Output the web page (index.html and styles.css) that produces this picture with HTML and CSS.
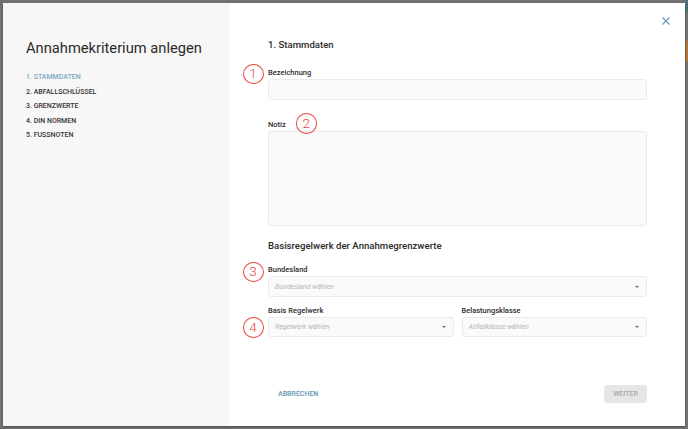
FILE: index.html
```html
<!DOCTYPE html>
<html lang="de">
<head>
<meta charset="utf-8">
<title>Annahmekriterium anlegen</title>
<link rel="stylesheet" href="styles.css">
</head>
<body>
<div class="backdrop">
  <div class="peek peek-teal"></div>
  <div class="peek peek-orange"></div>
  <div class="modal">
    <aside class="sidebar">
      <h1 class="title">Annahmekriterium anlegen</h1>
      <ol class="steps">
        <li class="step active">1. Stammdaten</li>
        <li class="step">2. Abfallschlüssel</li>
        <li class="step">3. Grenzwerte</li>
        <li class="step">4. DIN Normen</li>
        <li class="step">5. Fussnoten</li>
      </ol>
    </aside>
    <section class="main">
      <button class="close" aria-label="Schließen">
        <svg width="10" height="10" viewBox="0 0 10 10"><path d="M1.5 1.5 L8.5 8.5 M8.5 1.5 L1.5 8.5" stroke="#6a9fb8" stroke-width="1.2" fill="none"/></svg>
      </button>

      <span class="mark m1">1</span>
      <span class="mark m2">2</span>
      <span class="mark m3">3</span>
      <span class="mark m4">4</span>

      <h2 class="section-title">1. Stammdaten</h2>
      <div class="field f-bez">
        <label class="label">Bezeichnung</label>
        <div class="input"></div>
      </div>
      <div class="field f-notiz">
        <label class="label">Notiz</label>
        <div class="input textarea"></div>
      </div>

      <h2 class="section-title s2">Basisregelwerk der Annahmegrenzwerte</h2>
      <div class="field f-land">
        <label class="label">Bundesland</label>
        <div class="input select"><span class="placeholder">Bundesland wählen</span><span class="caret"></span></div>
      </div>
      <div class="row">
        <div class="field">
          <label class="label">Basis Regelwerk</label>
          <div class="input select"><span class="placeholder">Regelwerk wählen</span><span class="caret"></span></div>
        </div>
        <div class="field">
          <label class="label">Belastungsklasse</label>
          <div class="input select"><span class="placeholder">Abfallklasse wählen</span><span class="caret"></span></div>
        </div>
      </div>

      <footer class="footer">
        <button class="btn-text">Abbrechen</button>
        <button class="btn-next">Weiter</button>
      </footer>
    </section>
  </div>
</div>
</body>
</html>
```

FILE: styles.css
```css
* { box-sizing: border-box; }
html, body { margin: 0; padding: 0; }
body {
  width: 688px;
  height: 429px;
  overflow: hidden;
  background: #727272;
  font-family: Roboto, "Liberation Sans", Arial, sans-serif;
  color: #333;
}
.backdrop {
  position: relative;
  width: 688px;
  height: 429px;
  padding: 3px 0 0 3px;
}
.peek { position: absolute; left: 686px; width: 2px; }
.peek-teal { top: 0; height: 12px; background: #46707a; }
.peek-orange { top: 41px; height: 21px; background: #b7742a; }

.modal {
  display: flex;
  width: 682px;
  height: 423px;
  background: #fff;
  box-shadow: 0 1px 2px rgba(0,0,0,0.35);
}

/* Sidebar */
.sidebar {
  width: 227px;
  flex: none;
  background: #f7f7f7;
  padding: 35.7px 0 0 23px;
}
.title {
  margin: 0;
  font-size: 14.7px;
  line-height: 18px;
  font-weight: 400;
  color: #2a2a2a;
}
.steps {
  list-style: none;
  margin: 13.6px 0 0;
  padding: 0;
}
.step {
  font-size: 7px;
  line-height: 14.5px;
  font-weight: 500;
  text-transform: uppercase;
  color: #353535;
}
.step.active { color: #7aa9c0; }

/* Main */
.main {
  position: relative;
  flex: 1;
  display: flex;
  flex-direction: column;
  padding: 36.2px 38px 23px 38px;
}
.close {
  position: absolute;
  top: 13px;
  right: 14px;
  width: 10px;
  height: 10px;
  padding: 0;
  border: 0;
  background: none;
  display: flex;
}
.section-title {
  margin: 0;
  font-size: 9.6px;
  line-height: 12px;
  font-weight: 500;
  color: #2a2a2a;
}
.section-title.s2 { margin-top: 14.3px; }

.field { display: flex; flex-direction: column; }
.f-bez { margin-top: 16.5px; }
.f-notiz { margin-top: 19.5px; }
.f-land { margin-top: 13px; }

.label {
  display: block;
  font-size: 7.5px;
  line-height: 10px;
  font-weight: 500;
  color: #2c2c2c;
  margin-bottom: 1.5px;
}
.input {
  height: 21px;
  background: #fafafa;
  border: 1px solid #ebebeb;
  border-radius: 3px;
}
.textarea { height: 94.5px; }
.select {
  height: 20.7px;
  display: flex;
  align-items: center;
  justify-content: space-between;
  padding: 0 7px 0 6px;
}
.placeholder {
  font-size: 7px;
  font-style: italic;
  color: #b5b5b5;
}
.caret {
  width: 0;
  height: 0;
  border-left: 2.5px solid transparent;
  border-right: 2.5px solid transparent;
  border-top: 2.5px solid #6a6a6a;
}

.row {
  display: grid;
  grid-template-columns: 1fr 1fr;
  gap: 8px;
  margin-top: 8.4px;
}
.row .select { height: 20px; }

.footer {
  margin-top: auto;
  display: flex;
  justify-content: space-between;
  align-items: center;
}
.btn-text {
  border: 0;
  background: none;
  padding: 0 0 0 10px;
  font-family: inherit;
  font-size: 7px;
  font-weight: 500;
  text-transform: uppercase;
  color: #5f98b1;
}
.btn-next {
  width: 43px;
  height: 18px;
  border: 0;
  border-radius: 3px;
  background: #e6e6e6;
  font-family: inherit;
  font-size: 7px;
  font-weight: 500;
  text-transform: uppercase;
  color: #a8a8a8;
  padding: 0;
}

/* Annotation marks */
.mark {
  position: absolute;
  width: 21px;
  height: 20.5px;
  border: 1.5px solid #e8463d;
  border-radius: 50%;
  display: flex;
  align-items: center;
  justify-content: center;
  font-size: 13.5px;
  font-weight: 300;
  color: #e8463d;
  line-height: 1;
}
.m1 { left: 12.5px; top: 60.8px; }
.m2 { left: 65.7px; top: 110px; }
.m3 { left: 12.5px; top: 258.5px; }
.m4 { left: 12.5px; top: 314px; }
```
